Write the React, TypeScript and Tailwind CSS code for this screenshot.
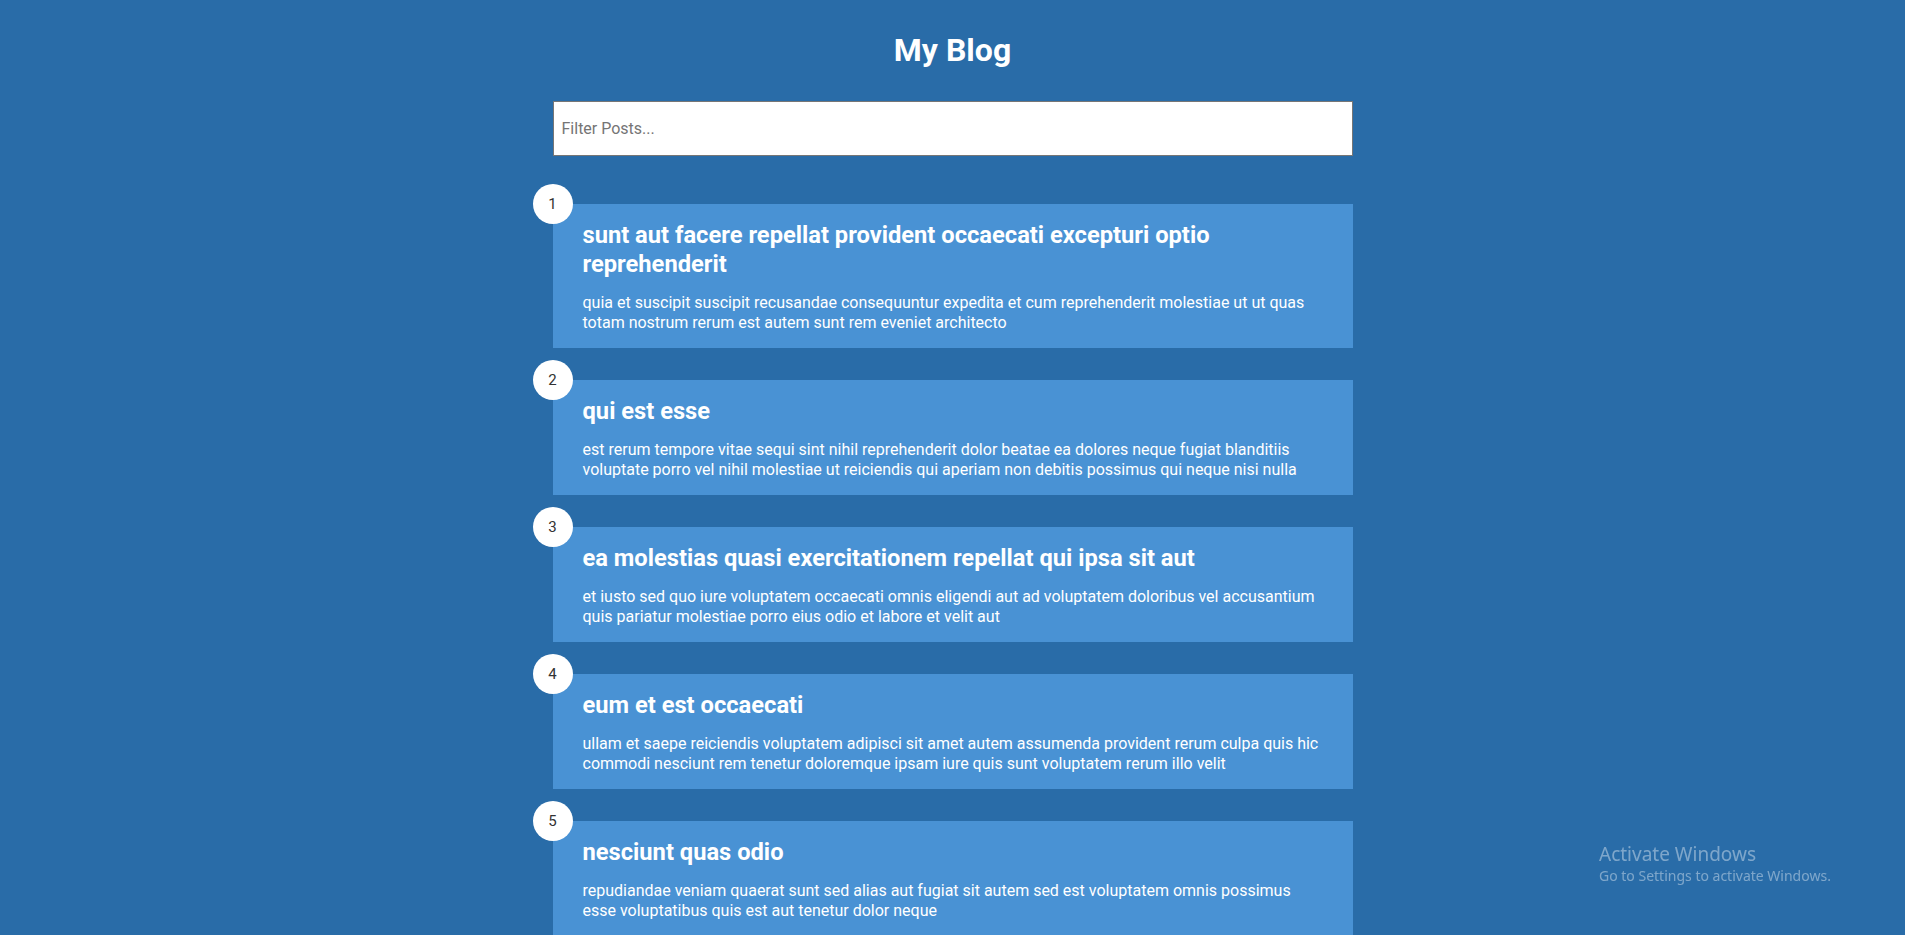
const posts = [
  {
    id: 1,
    title:
      'sunt aut facere repellat provident occaecati excepturi optio reprehenderit',
    body: 'quia et suscipit suscipit recusandae consequuntur expedita et cum reprehenderit molestiae ut ut quas totam nostrum rerum est autem sunt rem eveniet architecto',
  },
  {
    id: 2,
    title: 'qui est esse',
    body: 'est rerum tempore vitae sequi sint nihil reprehenderit dolor beatae ea dolores neque fugiat blanditiis voluptate porro vel nihil molestiae ut reiciendis qui aperiam non debitis possimus qui neque nisi nulla',
  },
  {
    id: 3,
    title: 'ea molestias quasi exercitationem repellat qui ipsa sit aut',
    body: 'et iusto sed quo iure voluptatem occaecati omnis eligendi aut ad voluptatem doloribus vel accusantium quis pariatur molestiae porro eius odio et labore et velit aut',
  },
  {
    id: 4,
    title: 'eum et est occaecati',
    body: 'ullam et saepe reiciendis voluptatem adipisci sit amet autem assumenda provident rerum culpa quis hic commodi nesciunt rem tenetur doloremque ipsam iure quis sunt voluptatem rerum illo velit',
  },
  {
    id: 5,
    title: 'nesciunt quas odio',
    body: 'repudiandae veniam quaerat sunt sed alias aut fugiat sit autem sed est voluptatem omnis possimus esse voluptatibus quis est aut tenetur dolor neque',
  },
];

const PostCard = ({
  id,
  title,
  body,
}: {
  id: number;
  title: string;
  body: string;
}) => (
  <div className="relative bg-[#4992d4] px-[30px] pt-[17px] pb-4 text-white">
    <div className="absolute -top-5 -left-5 flex h-10 w-10 items-center justify-center rounded-full bg-white text-[15px] text-[#333]">
      {id}
    </div>
    <h2 className="text-[23.7px] leading-[29px] font-bold">{title}</h2>
    <p className="mt-[14px] text-[16px] leading-[19.5px]">{body}</p>
  </div>
);

export default function App() {
  return (
    <div className="min-h-screen bg-[#296ca8] font-['Roboto',sans-serif]">
      <div className="mx-auto w-[800px] pb-12">
        <h1 className="pt-8 text-center text-[32px] leading-[37px] font-bold text-white">
          My Blog
        </h1>

        <input
          type="text"
          placeholder="Filter Posts..."
          className="mt-8 h-[55px] w-full border border-[#767676] bg-white px-2 text-[16px] text-[#333] placeholder:text-[#757575] outline-none"
        />

        <div className="mt-12 flex flex-col gap-8">
          {posts.map((post) => (
            <PostCard key={post.id} {...post} />
          ))}
        </div>
      </div>

      <div className="pointer-events-none fixed top-[842px] left-[1599px] font-['Noto_Sans','Open_Sans',sans-serif] text-white/40">
        <div className="text-[19px] leading-[24px]">Activate Windows</div>
        <div className="text-[14px] leading-[20px]">
          Go to Settings to activate Windows.
        </div>
      </div>
    </div>
  );
}
